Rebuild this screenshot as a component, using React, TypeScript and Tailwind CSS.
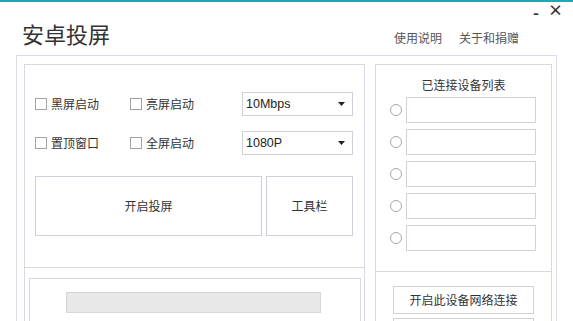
const font = "font-['Microsoft_YaHei','Noto_Sans_CJK_SC',sans-serif]"

function Check({ label, width }: { label: string; width: string }) {
  return (
    <div className={`flex items-center gap-[4px] ${width}`}>
      <span className="block h-[12px] w-[12px] border border-[#a4a4a4] bg-white" />
      <span className="text-[12px] leading-none text-[#333]">{label}</span>
    </div>
  )
}

function Select({ value }: { value: string }) {
  return (
    <div className="flex h-[24px] w-[111px] items-center justify-between border border-[#cfcfd8] bg-white pl-[3px] pr-[7px]">
      <span className="font-['Liberation_Sans',sans-serif] text-[12.5px] text-[#222]">{value}</span>
      <svg width="7" height="4" viewBox="0 0 7 4">
        <path d="M0 0h7L3.5 4z" fill="#222" />
      </svg>
    </div>
  )
}

function DeviceRow() {
  return (
    <div className="flex items-center gap-[4px]">
      <span className="block h-[12px] w-[12px] rounded-full border border-[#a8a8a8] bg-white" />
      <div className="h-[26px] w-[130px] border border-[#d2d2de] bg-white" />
    </div>
  )
}

export default function App() {
  return (
    <div className={`relative h-[321px] w-[573px] overflow-hidden border-t-2 border-[#22a5b5] bg-white ${font}`}>
      {/* window controls */}
      <div className="absolute right-[10px] top-[1px] flex items-start gap-[9px] text-[#333]">
        <span className="mt-[1px] text-[16px] font-bold leading-[16px]">-</span>
        <span className="text-[15px] font-bold leading-[14px]">×</span>
      </div>

      {/* header */}
      <div className="flex h-[53px] items-start justify-between pl-[22px] pr-[54px]">
        <h1 className="mt-[18px] text-[22px] leading-[26px] text-[#333]">安卓投屏</h1>
        <div className="mt-[28px] flex gap-[17px] text-[12px] leading-[16px] text-[#555]">
          <span>使用说明</span>
          <span>关于和捐赠</span>
        </div>
      </div>

      {/* outer frame */}
      <div className="ml-[16px] flex h-[300px] w-[541px] gap-[10px] border border-b-0 border-[#dcdce6] pl-[7px] pr-[3px] pt-[8px]">
        {/* left panel */}
        <div className="flex w-[341px] flex-col border border-b-0 border-[#d8d8e3]">
          <div className="h-[203px] border-b border-[#d8d8e3] pl-[10px] pt-[27px]">
            <div className="flex h-[24px] items-center">
              <Check label="黑屏启动" width="w-[95px]" />
              <Check label="亮屏启动" width="w-[112px]" />
              <Select value="10Mbps" />
            </div>
            <div className="mt-[15px] flex h-[24px] items-center">
              <Check label="置顶窗口" width="w-[95px]" />
              <Check label="全屏启动" width="w-[112px]" />
              <Select value="1080P" />
            </div>
            <div className="mt-[21px] flex gap-[4px]">
              <div className="flex h-[60px] w-[227px] items-center justify-center border border-[#cfcfdb] text-[12px] text-[#333]">
                开启投屏
              </div>
              <div className="flex h-[60px] w-[87px] items-center justify-center border border-[#cfcfdb] text-[12px] text-[#333]">
                工具栏
              </div>
            </div>
          </div>
          <div className="pl-[4px] pt-[10px]">
            <div className="h-[60px] w-[332px] border border-b-0 border-[#d8d8e3] pl-[36px] pt-[13px]">
              <div className="h-[21px] w-[255px] border border-[#d6d6d6] bg-[#e8e8e8]" />
            </div>
          </div>
        </div>

        {/* right panel */}
        <div className="flex w-[177px] flex-col border border-b-0 border-[#d8d8e3]">
          <div className="h-[207px] border-b border-[#d8d8e3] pl-[14px]">
            <div className="pr-[14px] pt-[12px] text-center text-[12px] leading-[16px] text-[#333]">已连接设备列表</div>
            <div className="mt-[4px] flex flex-col gap-[6px]">
              <DeviceRow />
              <DeviceRow />
              <DeviceRow />
              <DeviceRow />
              <DeviceRow />
            </div>
          </div>
          <div className="flex flex-col gap-[4px] pl-[17px] pt-[14px]">
            <div className="flex h-[28px] w-[141px] items-center justify-center border border-[#d2d2de] text-[12px] text-[#333]">
              开启此设备网络连接
            </div>
            <div className="h-[28px] w-[141px] border border-[#d2d2de]" />
          </div>
        </div>
      </div>
    </div>
  )
}
